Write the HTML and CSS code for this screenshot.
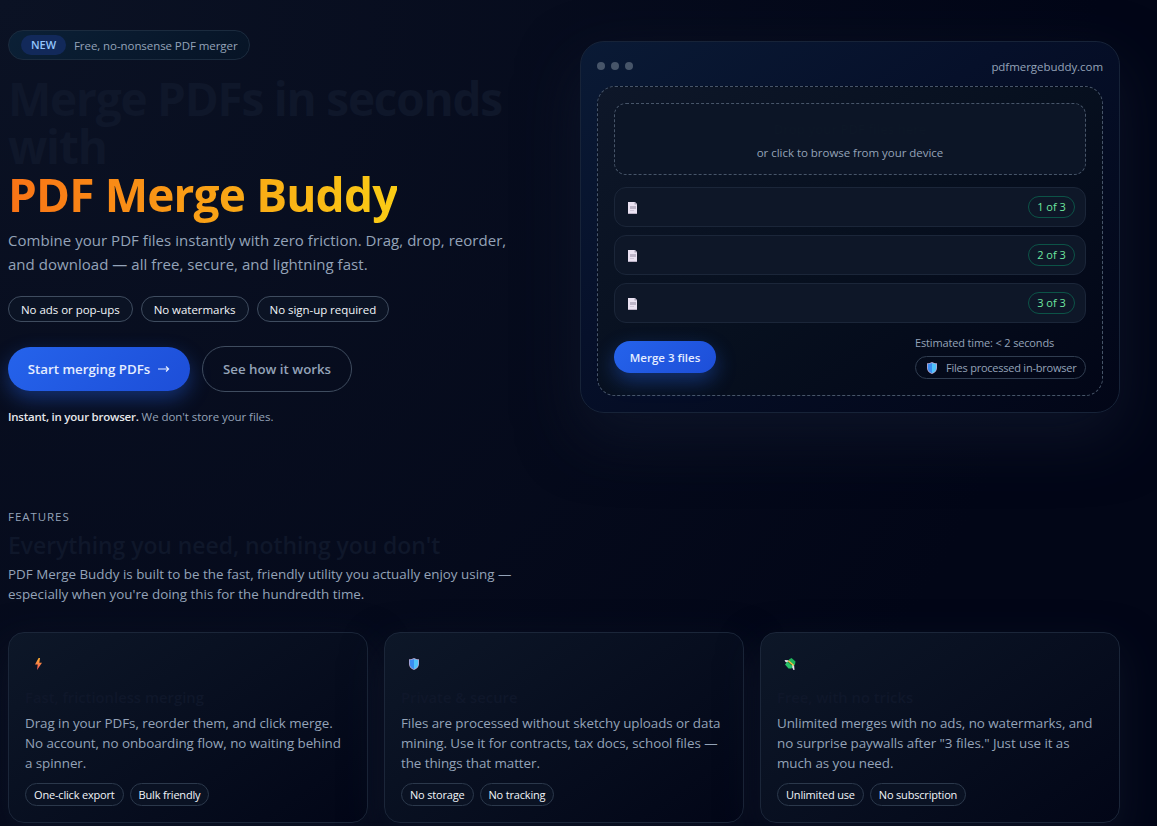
FILE: index.html
```html
<!DOCTYPE html>
<html lang="en">
<head>
    <meta charset="UTF-8">
    <meta name="viewport" content="width=device-width, initial-scale=1.0">
    <title>PDF Merge Buddy</title>
    <link rel="stylesheet" href="styles.css">
</head>
<body>

    <svg class="icon-defs" width="0" height="0">
        <defs>
            <linearGradient id="bolt-fill" x1="0" y1="0" x2="0" y2="1">
                <stop offset="0" stop-color="#ffb02e"/>
                <stop offset="1" stop-color="#f4505e"/>
            </linearGradient>
        </defs>
        <symbol id="icon-file" viewBox="0 0 9 12">
            <path d="M0 0h7l2 2v10H0z" fill="#eae2f2"/>
            <path d="M6.5 0L9 2.5H6.5z" fill="#a9a2b6"/>
            <path d="M2 4h6v3H2z" fill="#bdb5c8"/>
            <path d="M2 8.2h4v.8H2z" fill="#cbc3d5"/>
            <path d="M0 11h9v1H0z" fill="#b9b0c4"/>
        </symbol>
        <symbol id="icon-shield" viewBox="0 0 10 12">
            <path d="M5 0C6.500 1 8 1.200 10 1.300V6c0 3-2.200 5-5 6C2.200 11 0 9 0 6V1.300C2 1.200 3.500 1 5 0z" fill="#b9a7d0"/>
            <path d="M5 .9C3.700 1.700 2.300 2 .8 2.100V6c0 2.500 1.700 4.200 4.200 5.200z" fill="#3b8df2"/>
            <path d="M5 .9c1.300.8 2.700 1.100 4.200 1.200V6c0 2.500-1.700 4.200-4.200 5.200z" fill="#50c3fb"/>
        </symbol>
    </svg>

    <div class="page">
        <section class="hero">
            <div class="hero-text">
                <div class="badge"><span class="badge-new">NEW</span><span class="badge-label">Free, no-nonsense PDF merger</span></div>
                <h1>Merge PDFs in seconds with<br><span class="highlight">PDF Merge Buddy</span></h1>
                <p class="lead">Combine your PDF files instantly with zero friction. Drag, drop, reorder,<br>and download — all free, secure, and lightning fast.</p>
                <div class="pills">
                    <span class="pill">No ads or pop-ups</span>
                    <span class="pill">No watermarks</span>
                    <span class="pill">No sign-up required</span>
                </div>
                <div class="actions">
                    <button class="btn btn-primary">Start merging PDFs
                        <svg class="arrow" viewBox="0 0 12 8"><path d="M0 4h10.500M8 1.500L10.600 4 8 6.500" fill="none" stroke="currentColor" stroke-width="1.200"/></svg>
                    </button>
                    <button class="btn btn-outline">See how it works</button>
                </div>
                <p class="note"><strong>Instant, in your browser.</strong> <span>We don't store your files.</span></p>
            </div>

            <div class="demo">
                <div class="demo-bar">
                    <div class="dots"><i></i><i></i><i></i></div>
                    <span class="demo-url">pdfmergebuddy.com</span>
                </div>
                <div class="demo-body">
                    <div class="dropzone">
                        <div class="drop-title">Drop your PDF files here</div>
                        <div class="drop-sub">or click to browse from your device</div>
                    </div>
                    <div class="file-list">
                        <div class="file"><svg class="file-icon"><use href="#icon-file"/></svg><span class="count">1 of 3</span></div>
                        <div class="file"><svg class="file-icon"><use href="#icon-file"/></svg><span class="count">2 of 3</span></div>
                        <div class="file"><svg class="file-icon"><use href="#icon-file"/></svg><span class="count">3 of 3</span></div>
                    </div>
                    <div class="demo-footer">
                        <button class="btn btn-primary btn-small">Merge 3 files</button>
                        <div class="demo-meta">
                            <span class="eta">Estimated time: &lt; 2 seconds</span>
                            <span class="local"><svg class="shield"><use href="#icon-shield"/></svg><span>Files processed in-browser</span></span>
                        </div>
                    </div>
                </div>
            </div>
        </section>

        <section class="features">
            <div class="eyebrow">FEATURES</div>
            <h2>Everything you need, nothing you don't</h2>
            <p class="features-sub">PDF Merge Buddy is built to be the fast, friendly utility you actually enjoy using —<br>especially when you're doing this for the hundredth time.</p>

            <div class="cards">
                <article class="card">
                    <div class="card-icon"><svg class="bolt" viewBox="0 0 7 12"><path d="M3.600 0L0 6.600h2.700L2 12l5-7.200H4.300L5 0z" fill="url(#bolt-fill)"/></svg></div>
                    <h3>Fast, frictionless merging</h3>
                    <p>Drag in your PDFs, reorder them, and click merge.<br>No account, no onboarding flow, no waiting behind<br>a spinner.</p>
                    <div class="tags"><span class="tag">One-click export</span><span class="tag">Bulk friendly</span></div>
                </article>
                <article class="card">
                    <div class="card-icon"><svg class="shield"><use href="#icon-shield"/></svg></div>
                    <h3>Private &amp; secure</h3>
                    <p>Files are processed without sketchy uploads or data<br>mining. Use it for contracts, tax docs, school files —<br>the things that matter.</p>
                    <div class="tags"><span class="tag">No storage</span><span class="tag">No tracking</span></div>
                </article>
                <article class="card">
                    <div class="card-icon">
                        <svg class="money" viewBox="0 0 12 12">
                            <path d="M.5 2l4 .3-1 2.500L1.500 4zM7 8l3-2 .5 6-1.300-.3L8.500 10z" fill="#e4e0ea"/>
                            <path d="M5 1.500L7.500 0 11.500 3.500 11 6.500 9.500 7.500 4.500 3z" fill="#1fb25a"/>
                            <path d="M3.500 3.500L1 6.500 4.500 10.500 7.500 10.500 8.500 8z" fill="#27c268"/>
                            <path d="M3.700 3.200l1-.9L10 6.700l-.8 1.200z" fill="#f6c445"/>
                        </svg>
                    </div>
                    <h3>Free, with no tricks</h3>
                    <p>Unlimited merges with no ads, no watermarks, and<br>no surprise paywalls after "3 files." Just use it as<br>much as you need.</p>
                    <div class="tags"><span class="tag">Unlimited use</span><span class="tag">No subscription</span></div>
                </article>
            </div>
        </section>
    </div>

</body>
</html>
```

FILE: styles.css
```css
* {
    box-sizing: border-box;
}
body {
    margin: 0;
    min-height: 100vh;
    font-family: "Open Sans", "Noto Sans", sans-serif;
    color: #f1f5f9;
    background: radial-gradient(circle at top left, #0b1224 0, #020617 1100px);
}
h1, h2, h3, p {
    margin: 0;
}
.icon-defs {
    position: absolute;
}
.page {
    width: 1112px;
    height: 826px;
    margin-left: 8px;
}

/* Hero */
.hero {
    display: grid;
    grid-template-columns: 532px 540px;
    gap: 40px;
    padding-top: 30px;
}
.badge {
    display: flex;
    align-items: center;
    gap: 8px;
    width: 242px;
    height: 30px;
    padding: 0 12px;
    border: 1px solid #1b2b3e;
    border-radius: 999px;
    background: linear-gradient(135deg, #0b2036, #071426);
    white-space: nowrap;
}
.badge-new {
    flex: none;
    width: 45px;
    height: 20px;
    line-height: 20px;
    text-align: center;
    border-radius: 999px;
    background: #12295a;
    color: #93c5fd;
    font-size: 11px;
    font-weight: 600;
}
.badge-label {
    color: #94a3b8;
    font-size: 11.500px;
    letter-spacing: -0.070px;
    padding-top: 1px;
}
h1 {
    margin-top: 14px;
    font-size: 46px;
    line-height: 48px;
    font-weight: 700;
    letter-spacing: -1.250px;
    color: #0f172a;
}
.highlight {
    background: linear-gradient(90deg, #f97316, #facc15);
    -webkit-background-clip: text;
    background-clip: text;
    color: transparent;
    letter-spacing: -0.850px;
}
.lead {
    margin-top: 10px;
    font-size: 15px;
    line-height: 24px;
    letter-spacing: 0.040px;
    color: #94a3b8;
    white-space: nowrap;
}
.pills {
    display: flex;
    gap: 8px;
    margin-top: 20px;
}
.pill {
    height: 26px;
    line-height: 25px;
    padding: 0 12px;
    border: 1px solid #3f4c5f;
    border-radius: 999px;
    background: #0b1324;
    font-size: 11.500px;
    letter-spacing: -0.040px;
    white-space: nowrap;
}
.actions {
    display: flex;
    align-items: center;
    gap: 12px;
    margin-top: 24px;
}
.btn {
    border: none;
    border-radius: 999px;
    font-family: inherit;
    font-weight: 600;
    white-space: nowrap;
    cursor: pointer;
    padding: 0;
}
.btn-primary {
    display: flex;
    align-items: center;
    justify-content: center;
    gap: 8px;
    width: 182px;
    height: 44px;
    font-size: 13.300px;
    color: #e5edff;
    background: linear-gradient(135deg, #2563eb, #1d4ed8);
    box-shadow: 0 8px 20px rgba(37, 99, 235, 0.4);
}
.arrow {
    width: 12px;
    height: 8px;
}
.btn-outline {
    width: 150px;
    height: 46px;
    border: 1px solid #3f4c5f;
    background: transparent;
    color: #94a3b8;
    font-size: 13.300px;
}
.note {
    margin-top: 16px;
    font-size: 11.500px;
    line-height: 18px;
    letter-spacing: -0.060px;
    color: #94a3b8;
}
.note strong {
    color: #e5e7eb;
    font-weight: 600;
    letter-spacing: -0.230px;
}

/* Demo window */
.demo {
    height: 372px;
    margin-top: 11px;
    padding: 16px;
    border: 1px solid #172338;
    border-radius: 24px;
    background: linear-gradient(145deg, #0a1a35 0, #06102a 40%, #020617 100%);
    box-shadow: 0 24px 60px rgba(15, 23, 42, 0.8);
}
.demo-bar {
    display: flex;
    align-items: center;
    justify-content: space-between;
    height: 16px;
    margin-bottom: 12px;
}
.dots {
    display: flex;
    gap: 6px;
}
.dots i {
    width: 8px;
    height: 8px;
    border-radius: 50%;
    background: #475569;
}
.demo-url {
    font-size: 11.500px;
    line-height: 16px;
    padding-top: 2px;
    letter-spacing: -0.050px;
    color: #94a3b8;
}
.demo-body {
    height: 310px;
    padding: 16px;
    border: 1px dashed #475569;
    border-radius: 18px;
    background: linear-gradient(145deg, #0e1729 0, #07101f 50%, #020617 100%);
}
.dropzone {
    height: 72px;
    padding-top: 14px;
    border: 1px dashed #475569;
    border-radius: 12px;
    background: #0c1526;
    text-align: center;
}
.drop-title {
    font-size: 13px;
    line-height: 22px;
    font-weight: 600;
    color: #0d1727;
}
.drop-sub {
    margin-top: 4px;
    font-size: 11.500px;
    line-height: 18px;
    letter-spacing: -0.030px;
    color: #94a3b8;
}
.file-list {
    display: flex;
    flex-direction: column;
    gap: 8px;
    margin-top: 12px;
}
.file {
    display: flex;
    align-items: center;
    justify-content: space-between;
    height: 40px;
    padding: 1px 10px 0 13px;
    border: 1px solid #1b2639;
    border-radius: 12px;
    background: #0e1728;
}
.file-icon {
    width: 9px;
    height: 12px;
}
.count {
    width: 47px;
    height: 22px;
    margin-top: -1px;
    line-height: 20px;
    text-align: center;
    border: 1px solid #0c5347;
    border-radius: 999px;
    color: #6ee7a0;
    font-size: 11px;
    font-weight: 500;
}
.demo-footer {
    display: flex;
    justify-content: space-between;
    margin-top: 12px;
}
.btn-small {
    width: 102px;
    height: 32px;
    margin-top: 6px;
    font-size: 11.500px;
}
.demo-meta {
    width: 171px;
    color: #94a3b8;
    font-size: 11px;
    letter-spacing: -0.150px;
    white-space: nowrap;
}
.eta {
    display: block;
    height: 21px;
    line-height: 16px;
}
.local {
    display: flex;
    align-items: center;
    gap: 9px;
    height: 23px;
    padding-left: 11px;
    border: 1px solid #303d50;
    border-radius: 999px;
    letter-spacing: -0.230px;
}
.shield {
    width: 10px;
    height: 12px;
}

/* Features */
.features {
    padding-top: 82px;
}
.eyebrow {
    font-size: 11.500px;
    line-height: 18px;
    letter-spacing: 0.950px;
    color: #94a3b8;
}
h2 {
    margin-top: 3px;
    font-size: 23px;
    line-height: 32px;
    font-weight: 600;
    letter-spacing: -0.080px;
    color: #0f172a;
}
.features-sub {
    margin-top: 3px;
    font-size: 13.400px;
    line-height: 20px;
    color: #94a3b8;
}
.cards {
    display: grid;
    grid-template-columns: repeat(3, 1fr);
    gap: 16px;
    margin-top: 28px;
}
.card {
    height: 191px;
    padding: 16px;
    border: 1px solid #1b2639;
    border-radius: 16px;
    background: linear-gradient(145deg, #0d1728, #020617);
    box-shadow: 0 16px 40px rgba(15, 23, 42, 0.7);
}
.card-icon {
    display: flex;
    align-items: center;
    justify-content: center;
    width: 26px;
    height: 30px;
}
.bolt {
    width: 7px;
    height: 12px;
}
.money {
    width: 12px;
    height: 12px;
}
h3 {
    margin-top: 7px;
    font-size: 14.800px;
    line-height: 22px;
    font-weight: 600;
    color: #0f172a;
}
.card p {
    margin-top: 5px;
    font-size: 13.400px;
    line-height: 20px;
    letter-spacing: -0.060px;
    color: #94a3b8;
    white-space: nowrap;
}
.tags {
    display: flex;
    gap: 6px;
    margin-top: 10px;
}
.tag {
    height: 23px;
    line-height: 21px;
    padding: 0 8px;
    border: 1px solid #2b384b;
    border-radius: 999px;
    background: #0a1223;
    font-size: 11px;
    letter-spacing: -0.180px;
    white-space: nowrap;
}
```
